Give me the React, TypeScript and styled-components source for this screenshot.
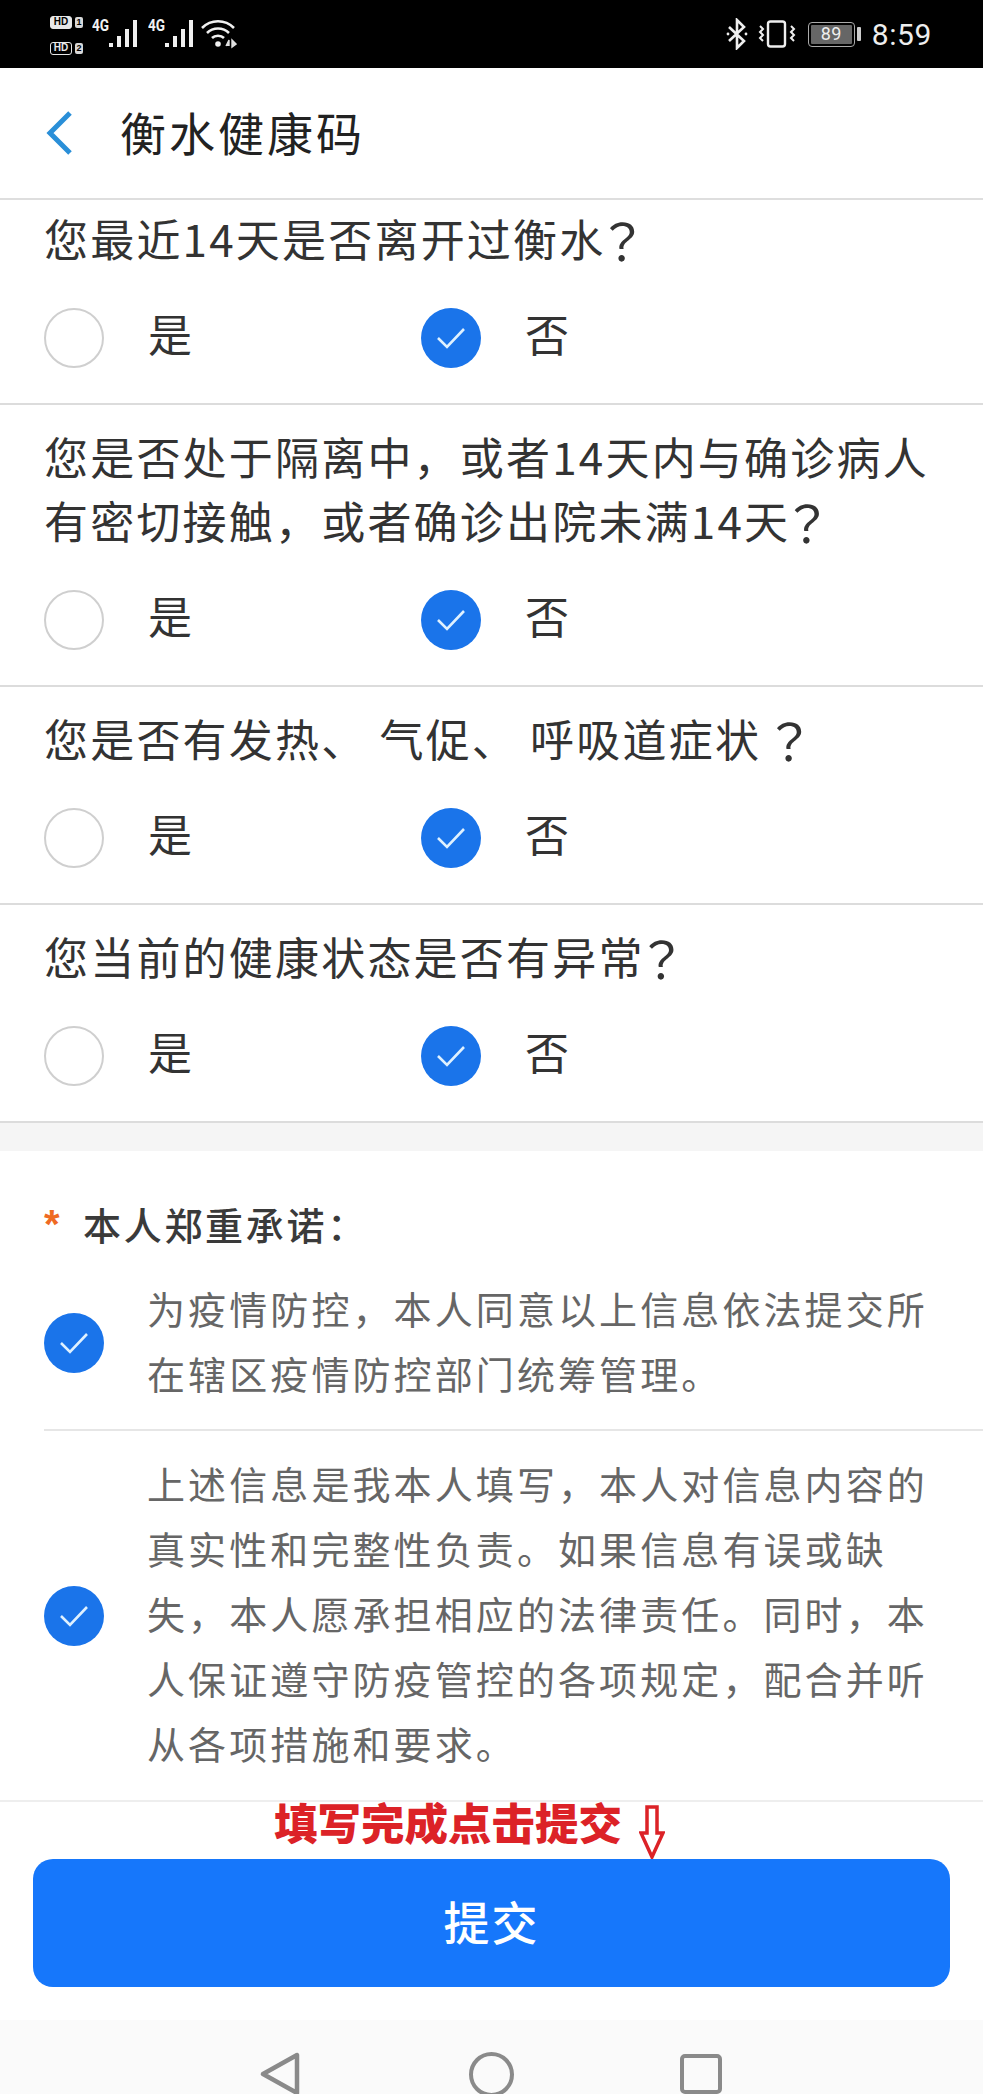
import React from "react";
import styled, { createGlobalStyle } from "styled-components";

const Global = createGlobalStyle`
  html, body { margin: 0; padding: 0; background: #fff; }
  body { font-family: "Noto Sans CJK SC", "Noto Sans", sans-serif; }
`;

const Page = styled.div`
  width: 983px;
  height: 2094px;
  overflow: hidden;
  background: #fff;
  display: flex;
  flex-direction: column;
`;

const StatusBar = styled.div`
  height: 68px;
  flex: none;
  background: #000;
  color: #f2f2f2;
  display: flex;
  align-items: flex-start;
  justify-content: space-between;
  padding: 0 51px 0 50px;
  box-sizing: border-box;
`;

const StatusGroup = styled.div`
  display: flex;
  align-items: center;
  height: 68px;
`;

const SimColumn = styled.div`
  display: flex;
  flex-direction: column;
  gap: 13px;
  margin-right: 9px;
  margin-top: 2px;
`;

const SimRow = styled.div`
  display: flex;
  align-items: center;
  gap: 3px;
`;

const HdBadge = styled.span`
  width: 22px;
  height: 13px;
  box-sizing: border-box;
  border: 1.5px solid #e8e8e8;
  border-radius: 3px;
  background: ${(p: { $filled?: boolean }) => (p.$filled ? "#e8e8e8" : "transparent")};
  color: ${(p: { $filled?: boolean }) => (p.$filled ? "#000" : "#e8e8e8")};
  font: 700 10px/10px "Liberation Sans", sans-serif;
  text-align: center;
`;

const SimNumber = styled.span`
  width: 8px;
  height: 11px;
  border-radius: 2px;
  background: #d8d8d8;
  color: #000;
  font: 700 9px/11px "Liberation Sans", sans-serif;
  text-align: center;
`;

const Signal = styled.div`
  position: relative;
  width: 45px;
  height: 30px;
  margin-right: 11px;
  margin-top: -1px;
`;

const SignalLabel = styled.span`
  position: absolute;
  left: 0;
  top: 0;
  font: 700 16px/14px "Roboto", sans-serif;
  transform: scaleX(0.85);
  transform-origin: left;
`;

const TimeLabel = styled.span`
  font: 400 30px/34px "Roboto", sans-serif;
  margin-left: 11px;
  margin-top: 1px;
  color: #eee;
  letter-spacing: 0.6px;
`;

const Battery = styled.div`
  width: 47px;
  height: 25px;
  box-sizing: border-box;
  border: 1.5px solid #aaa;
  border-radius: 4px;
  padding: 2px;
  margin-left: 12px;
  display: flex;
`;

const BatteryFill = styled.div`
  flex: 1;
  background: #666;
  border-radius: 1px;
  color: #eee;
  font: 400 18px/18px "Roboto", sans-serif;
  text-align: center;
  letter-spacing: 0.5px;
`;

const BatteryCap = styled.div`
  width: 4px;
  height: 14px;
  background: #ccc;
  margin-left: 2px;
  border-radius: 1px;
`;

const Header = styled.div`
  height: 132px;
  flex: none;
  box-sizing: border-box;
  border-bottom: 2px solid #dedede;
  display: flex;
  align-items: center;
  padding-left: 44px;
`;

const BackIcon = styled.svg`
  width: 32px;
  height: 44px;
  margin-right: 44px;
  flex: none;
`;

const Title = styled.div`
  font-size: 46px;
  line-height: 60px;
  letter-spacing: 3px;
  color: #222;
  margin-bottom: 4px;
`;

const Question = styled.section<{ $first?: boolean }>`
  box-sizing: border-box;
  padding: ${(p) => (p.$first ? "6px" : "19px")} 0 35px 44px;
  border-bottom: 2px solid #dcdcdc;
`;

const QuestionText = styled.div`
  font-size: 44px;
  line-height: 64px;
  letter-spacing: 2.2px;
  color: #333;
  white-space: nowrap;
`;

const Tight = styled.span`
  letter-spacing: -6px;
`;

const Mark = styled.span<{ $wide?: boolean }>`
  font-family: "Noto Sans CJK TC", sans-serif;
  font-size: 50px;
  line-height: 1;
  vertical-align: -4px;
  margin-left: ${(p) => (p.$wide ? "3px" : "0")};
`;

const Options = styled.div`
  display: grid;
  grid-template-columns: 377px auto;
  margin-top: 38px;
  height: 60px;
`;

const Option = styled.div`
  display: flex;
  align-items: center;
  gap: 44px;
  font-size: 44px;
  color: #333;
`;

const OptionLabel = styled.span`
  line-height: 44px;
  padding-bottom: 10px;
`;

const Radio = styled.span<{ $on?: boolean }>`
  width: 60px;
  height: 60px;
  flex: none;
  box-sizing: border-box;
  border-radius: 50%;
  border: ${(p) => (p.$on ? "none" : "2px solid #cfcfcf")};
  background: ${(p) => (p.$on ? "#1a74ea" : "#fff")};
  display: flex;
  align-items: center;
  justify-content: center;
`;

const Band = styled.div`
  height: 28px;
  flex: none;
  background: #f5f5f5;
`;

const Pledge = styled.section`
  padding: 44px 0 0 44px;
`;

const PledgeTitle = styled.div`
  display: flex;
  align-items: center;
  height: 56px;
  margin-bottom: 24px;
  font-size: 38px;
  font-weight: 500;
  letter-spacing: 2.7px;
  color: #3a3a3a;
`;

const Star = styled.span`
  width: 39px;
  color: #ef6a23;
  font: 700 40px/40px "Liberation Sans", sans-serif;
  margin-top: 2px;
`;

const PledgeItem = styled.div<{ $last?: boolean }>`
  display: flex;
  align-items: center;
  gap: 43px;
  padding-top: ${(p) => (p.$last ? "19px" : "0")};
  padding-bottom: ${(p) => (p.$last ? "19px" : "18px")};
  border-bottom: ${(p) => (p.$last ? "none" : "2px solid #e6e6e6")};
`;

const PledgeText = styled.div`
  font-size: 38px;
  line-height: 65px;
  letter-spacing: 3.1px;
  color: #666;
  white-space: nowrap;
  padding-bottom: 6px;
`;

const Footer = styled.div`
  position: relative;
  flex: none;
  height: 220px;
  box-sizing: border-box;
  border-top: 2px solid #eeeeee;
  padding: 57px 33px 33px;
`;

const SubmitButton = styled.button`
  display: block;
  width: 917px;
  height: 128px;
  padding: 0 0 6px;
  border: none;
  border-radius: 20px;
  background: #1677fb;
  color: #fff;
  font-family: inherit;
  font-size: 46px;
  font-weight: 500;
  letter-spacing: 2px;
`;

const Annotation = styled.div`
  position: absolute;
  left: 274px;
  top: -5px;
  font-size: 43.5px;
  line-height: 50px;
  font-weight: 900;
  color: #dc2227;
  white-space: nowrap;
`;

const AnnotationArrow = styled.svg`
  position: absolute;
  left: 639px;
  top: 3px;
  width: 26px;
  height: 54px;
`;

const NavBar = styled.div`
  flex: 1;
  background: #fafafa;
  display: grid;
  grid-template-columns: 40px 42px 42px;
  column-gap: 169px;
  padding: 32px 0 0 260px;
`;

const NavIcon = styled.svg`
  display: block;
  overflow: visible;
`;

const Check = () => (
  <svg width="34" height="28" viewBox="0 0 34 28" aria-hidden>
    <path d="M4 14 L13 23 L30 5" fill="none" stroke="#dff1ff" strokeWidth="2.6" />
  </svg>
);

const Bars = ({ x = 17 }: { x?: number }) => (
  <svg width="45" height="30" viewBox="0 0 45 30" style={{ position: "absolute", left: 0, top: 0 }} aria-hidden>
    <g fill="#f0f0f0">
      <rect x={x} y="24" width="4" height="4" />
      <rect x={x + 8} y="17" width="4" height="11" />
      <rect x={x + 16} y="10" width="4" height="18" />
      <rect x={x + 24} y="1" width="4" height="27" />
    </g>
  </svg>
);

const Choice = () => (
  <Options>
    <Option>
      <Radio />
      <OptionLabel>是</OptionLabel>
    </Option>
    <Option>
      <Radio $on>
        <Check />
      </Radio>
      <OptionLabel>否</OptionLabel>
    </Option>
  </Options>
);

export default function App() {
  return (
    <Page>
      <Global />
      <StatusBar>
        <StatusGroup>
          <SimColumn>
            <SimRow>
              <HdBadge $filled>HD</HdBadge>
              <SimNumber>1</SimNumber>
            </SimRow>
            <SimRow>
              <HdBadge>HD</HdBadge>
              <SimNumber>2</SimNumber>
            </SimRow>
          </SimColumn>
          <Signal>
            <SignalLabel>4G</SignalLabel>
            <Bars />
          </Signal>
          <Signal>
            <SignalLabel>4G</SignalLabel>
            <Bars />
          </Signal>
          <svg width="36" height="30" viewBox="0 0 36 30" style={{ marginTop: -1, marginLeft: -3 }} aria-hidden>
            <g fill="none" stroke="#f0f0f0" strokeWidth="2.6">
              <path d="M1 9 C10 0 24 0 33 9" />
              <path d="M6 14 C12 8 22 8 28 14" />
              <path d="M11 19 C14 16 20 16 23 19" />
            </g>
            <circle cx="17" cy="25" r="2.8" fill="#f0f0f0" />
            <path d="M25 27 L28 21 V27 M31 21 V28 L35 25 Z" stroke="#e0e0e0" strokeWidth="1.4" fill="#e0e0e0" />
          </svg>
        </StatusGroup>
        <StatusGroup>
          <svg width="22" height="32" viewBox="0 0 22 32" aria-hidden>
            <path d="M3 9 L18 23 L11 30 V2 L18 9 L3 23" fill="none" stroke="#eee" strokeWidth="2.6" />
            <circle cx="2" cy="16" r="1.4" fill="#eee" />
            <circle cx="20" cy="16" r="1.4" fill="#eee" />
          </svg>
          <svg width="38" height="28" viewBox="0 0 38 28" style={{ marginLeft: 10 }} aria-hidden>
            <rect x="10" y="1.5" width="17" height="25" rx="2.5" fill="none" stroke="#eee" strokeWidth="2.4" />
            <path d="M2 6 L5 9 L2 12 L5 15 L2 18 L5 21" fill="none" stroke="#eee" strokeWidth="2" />
            <path d="M33 6 L36 9 L33 12 L36 15 L33 18 L36 21" fill="none" stroke="#eee" strokeWidth="2" />
          </svg>
          <Battery>
            <BatteryFill>89</BatteryFill>
          </Battery>
          <BatteryCap />
          <TimeLabel>8:59</TimeLabel>
        </StatusGroup>
      </StatusBar>

      <Header>
        <BackIcon viewBox="0 0 32 44" aria-hidden>
          <path d="M26 2 L6 22 L26 42" fill="none" stroke="#2a8fd8" strokeWidth="5" />
        </BackIcon>
        <Title>衡水健康码</Title>
      </Header>

      <Question $first>
        <QuestionText>
          您最近14天是否离开过衡<Tight>水</Tight>
          <Mark>？</Mark>
        </QuestionText>
        <Choice />
      </Question>
      <Question>
        <QuestionText>
          您是否处于隔离中，或者14天内与确诊病人
          <br />
          有密切接触，或者确诊出院未满14<Tight>天</Tight>
          <Mark>？</Mark>
        </QuestionText>
        <Choice />
      </Question>
      <Question>
        <QuestionText>
          您是否有发热、 气促、 呼吸道症状<Mark $wide>？</Mark>
        </QuestionText>
        <Choice />
      </Question>
      <Question>
        <QuestionText>
          您当前的健康状态是否有异<Tight>常</Tight>
          <Mark>？</Mark>
        </QuestionText>
        <Choice />
      </Question>

      <Band />

      <Pledge>
        <PledgeTitle>
          <Star>*</Star>本人郑重承诺：
        </PledgeTitle>
        <PledgeItem>
          <Radio $on>
            <Check />
          </Radio>
          <PledgeText>
            为疫情防控，本人同意以上信息依法提交所
            <br />
            在辖区疫情防控部门统筹管理。
          </PledgeText>
        </PledgeItem>
        <PledgeItem $last>
          <Radio $on>
            <Check />
          </Radio>
          <PledgeText>
            上述信息是我本人填写，本人对信息内容的
            <br />
            真实性和完整性负责。如果信息有误或缺
            <br />
            失，本人愿承担相应的法律责任。同时，本
            <br />
            人保证遵守防疫管控的各项规定，配合并听
            <br />
            从各项措施和要求。
          </PledgeText>
        </PledgeItem>
      </Pledge>

      <Footer>
        <Annotation>填写完成点击提交</Annotation>
        <AnnotationArrow viewBox="0 0 26 54" aria-hidden>
          <path d="M8 2 H18 V28 H24 L13 52 L2 28 H8 Z" fill="#fff" stroke="#dc2227" strokeWidth="3.5" />
        </AnnotationArrow>
        <SubmitButton>提交</SubmitButton>
      </Footer>

      <NavBar>
        <NavIcon width="40" height="44" viewBox="0 0 40 44" aria-hidden>
          <path d="M37 3 V41 L3 22 Z" fill="none" stroke="#8a8a8a" strokeWidth="4.5" strokeLinejoin="round" />
        </NavIcon>
        <NavIcon width="45" height="45" viewBox="0 0 45 45" aria-hidden>
          <circle cx="22.5" cy="22.5" r="20.5" fill="none" stroke="#8a8a8a" strokeWidth="4" />
        </NavIcon>
        <NavIcon width="42" height="40" viewBox="0 0 42 40" style={{ marginTop: 2 }} aria-hidden>
          <rect x="2" y="2" width="38" height="36" rx="3" fill="none" stroke="#8a8a8a" strokeWidth="4" />
        </NavIcon>
      </NavBar>
    </Page>
  );
}
